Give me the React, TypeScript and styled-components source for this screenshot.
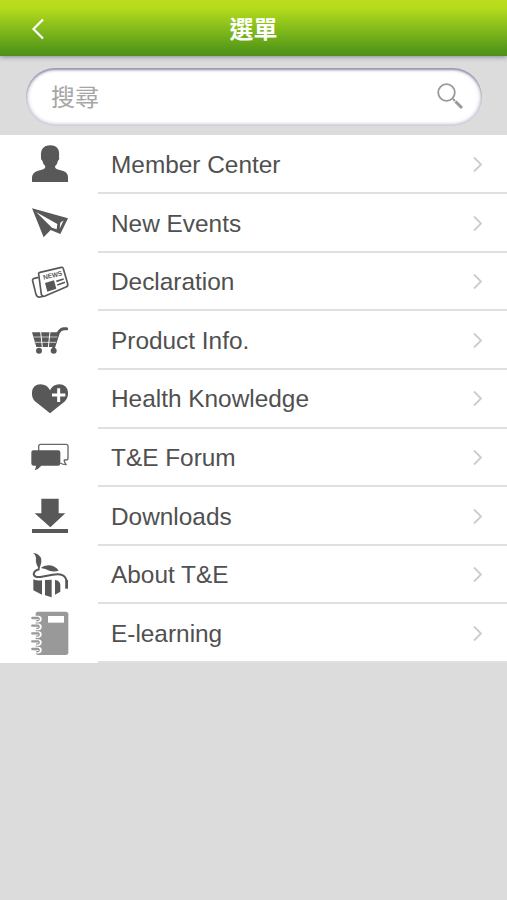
import React from "react";
import styled, { createGlobalStyle } from "styled-components";

const GlobalStyle = createGlobalStyle`
  * { box-sizing: border-box; }
  html, body { margin: 0; background: #dcdcdc; }
  body { font-family: "Liberation Sans", "Noto Sans CJK TC", sans-serif; overflow: hidden; }
`;

const Screen = styled.div`
  min-height: 100vh;
  background: #dcdcdc;
`;

const Header = styled.header`
  position: relative;
  display: grid;
  grid-template-columns: 76px 1fr 76px;
  align-items: center;
  height: 56px;
  background: linear-gradient(#b9de1c 0, #b5db1c 14%, #88bf1b 48%, #65a519 76%, #4b9017 100%);
  box-shadow: 0 1px 5px #8585a0;
`;

const BackButton = styled.button`
  display: flex;
  align-items: center;
  justify-content: center;
  height: 56px;
  padding: 2px 0 0;
  border: 0;
  background: none;
`;

const Title = styled.h1`
  margin: 0;
  color: #fff;
  font: 700 24px/36px "Noto Sans CJK TC", sans-serif;
  text-align: center;
`;

const SearchBar = styled.div`
  height: 79px;
  padding: 12px 25px 0 26px;
`;

const SearchField = styled.label`
  display: flex;
  align-items: center;
  justify-content: space-between;
  height: 58px;
  padding: 0 18px 3px 25px;
  border-radius: 29px;
  background: #fff;
  box-shadow: inset 0 2px 2px #9a9aae, inset 0 0 4px 1px #b9b9d0, inset 0 -2px 2px #ececf0;
  color: #a6a6a6;
  font: 400 24px/36px "Noto Sans CJK TC", sans-serif;
`;

const Menu = styled.nav`
  padding-top: 0.7px;
  background: #fff;
`;

const Row = styled.a`
  display: grid;
  grid-template-columns: 98px 1fr;
  height: 58.6px;
  color: #505050;
  text-decoration: none;
`;

const IconCell = styled.span`
  display: flex;
  align-items: center;
  padding: 0 0 1px 30px;
`;

const RowBody = styled.span`
  display: flex;
  align-items: center;
  justify-content: space-between;
  padding: 2px 23px 0 13px;
  border-bottom: 2px solid #e0e0e0;
`;

const Label = styled.span`
  font-size: 24.4px;
  line-height: 30px;
  white-space: nowrap;
`;

const Glyph = styled.svg`
  display: block;
  width: 40px;
  height: 48px;
  fill: #585858;
`;

const Stroke = styled.svg`
  display: block;
  fill: none;
`;

const NewsText = styled.text`
  font: 700 20px "Liberation Sans", sans-serif;
`;

type Item = { label: string; top: number; art: React.ReactNode };

const items: Item[] = [
  {
    label: "Member Center",
    top: 14,
    art: <path d="M36 140V126Q37 112 52 107L70 102Q77 99 76 93Q69 86 67 76Q61 73 63 64Q60 31 91 30Q121 31 117 64Q120 72 114 76Q112 87 105 93Q104 99 111 102L130 107Q144 112 144 126V140Z" />,
  },
  {
    label: "New Events",
    top: 190,
    art: (
      <>
        <path d="M36 218L144 248L121 295L92 283L71 305Z" />
        <path d="M48 229L112 265L110 281L96 276ZM121 261L131 254L119 279Z" fill="#fff" />
      </>
    ),
  },
  {
    label: "Declaration",
    top: 17,
    art: (
      <>
        <g fill="#fff" stroke="#585858" strokeWidth="5" strokeLinejoin="round">
          <path d="M56 75L43 78Q36 80 38 86L48 126Q51 136 61 134L76 130" />
          <path d="M56 65Q55 61 60 60L124 45Q129 44 130 49L143 94Q145 102 138 104L75 131Q67 134 64 126Z" />
        </g>
        <NewsText transform="translate(71 82) rotate(-13)" textLength="58" lengthAdjust="spacingAndGlyphs">NEWS</NewsText>
        <path d="M75 92L102 84L109 109L82 118Z" />
        <path d="M109 87L131 80M112 98L135 90" stroke="#585858" strokeWidth="5" />
      </>
    ),
  },
  {
    label: "Product Info.",
    top: 193,
    art: (
      <>
        <path d="M36 242H115L101 286H49Z" />
        <path d="M101 286L115 243Q122 231 132 231H140" fill="none" stroke="#585858" strokeWidth="9" strokeLinecap="round" />
        <path d="M39 256H112" stroke="#aaa" strokeWidth="4" />
        <path d="M42 272H108" stroke="#ccc" strokeWidth="3" />
        <path d="M62 241L67 287M90 241L85 287" stroke="#fff" strokeWidth="3" />
        <circle cx="57" cy="297" r="9" /><circle cx="101" cy="297" r="9" />
      </>
    ),
  },
  {
    label: "Health Knowledge",
    top: 15,
    art: (
      <>
        <path d="M90 130L44 93Q34 81 36 66Q39 43 61 43Q82 43 90 61Q98 43 118 43Q142 44 144 67Q145 83 135 94Z" />
        <path d="M116 55V96M96 75H136" stroke="#fff" strokeWidth="9" />
      </>
    ),
  },
  {
    label: "T&E Forum",
    top: 191,
    art: (
      <>
        <path d="M56 246V231Q56 225 62 225H138Q144 225 144 231V266Q144 272 138 272H133V277L138 286Q128 286 121 281" fill="none" stroke="#686868" strokeWidth="4" />
        <path d="M40 243H115Q121 243 121 249V282Q121 289 115 289H64Q56 299 44 303Q48 296 48 289H40Q34 289 34 282V249Q34 243 40 243Z" />
      </>
    ),
  },
  {
    label: "Downloads",
    top: 13,
    art: <path d="M64 33H116V77H136L91 119L44 77H64ZM36 124H144V136H36Z" />,
  },
  {
    label: "About T&E",
    top: 188,
    art: (
      <>
        <path d="M39 194Q53 194 62 207Q67 218 60 236L57 247Q53 242 54 237Q46 222 48 211Q48 200 39 194Z" />
        <path d="M62 239Q72 230 88 231Q107 233 116 247Q102 252 88 247Q76 241 62 239Z" />
        <path d="M58 243Q43 246 41 257Q43 268 61 266L98 259Q138 252 140 281V300" fill="none" stroke="#585858" strokeWidth="6" />
        <path d="M140 275V301" stroke="#585858" strokeWidth="8" />
        <path d="M40 273Q51 278 66 276V319L40 306ZM75 275L95 274V327L75 321ZM105 275Q121 277 121 291V310L105 319Z" />
      </>
    ),
  },
  {
    label: "E-learning",
    top: 58,
    art: (
      <>
        <path d="M54 66H137Q145 66 145 74V188Q145 196 137 196H54Q47 196 47 188V74Q47 66 54 66Z" fill="#999" />
        <path d="M84 79H132V99H84Z" fill="#fff" />
        {[85, 108, 131, 155, 178].map((y) => (
          <g key={y} fill="none" strokeLinecap="round">
            <path d={`M38 ${y}H54Q61 ${y} 58 ${y + 6}Q56 ${y + 8} 50 ${y + 7}`} stroke="#fff" strokeWidth="13" />
            <path d={`M37 ${y}H54`} stroke="#999" strokeWidth="7" />
            <path d={`M52 ${y}Q60 ${y} 57 ${y + 6}Q55 ${y + 9} 50 ${y + 8}`} stroke="#999" strokeWidth="4" />
          </g>
        ))}
      </>
    ),
  },
];

export default function App() {
  return (
    <Screen>
      <GlobalStyle />
      <Header>
        <BackButton aria-label="Back">
          <Stroke width="14" height="22" viewBox="0 0 14 22" stroke="#fff" strokeWidth="2.2">
            <path d="M12 1.5L2.5 11L12 20.5" />
          </Stroke>
        </BackButton>
        <Title>選單</Title>
      </Header>
      <SearchBar>
        <SearchField>
          <span>搜尋</span>
          <Stroke width="28" height="28" viewBox="0 0 28 28" stroke="#999">
            <circle cx="10.5" cy="10.5" r="8.3" strokeWidth="1.8" />
            <path d="M17 17L19 19" strokeWidth="2" />
            <path d="M19.5 19.5L26 26" strokeWidth="3" />
          </Stroke>
        </SearchField>
      </SearchBar>
      <Menu>
        {items.map((item) => (
          <Row key={item.label}>
            <IconCell>
              <Glyph viewBox={`30 ${item.top} 120 144`}>{item.art}</Glyph>
            </IconCell>
            <RowBody>
              <Label>{item.label}</Label>
              <Stroke width="12" height="18" viewBox="0 0 12 18" stroke="#ccc" strokeWidth="1.8">
                <path d="M2 1.5L9 8.5L2 15.5" />
              </Stroke>
            </RowBody>
          </Row>
        ))}
      </Menu>
    </Screen>
  );
}
